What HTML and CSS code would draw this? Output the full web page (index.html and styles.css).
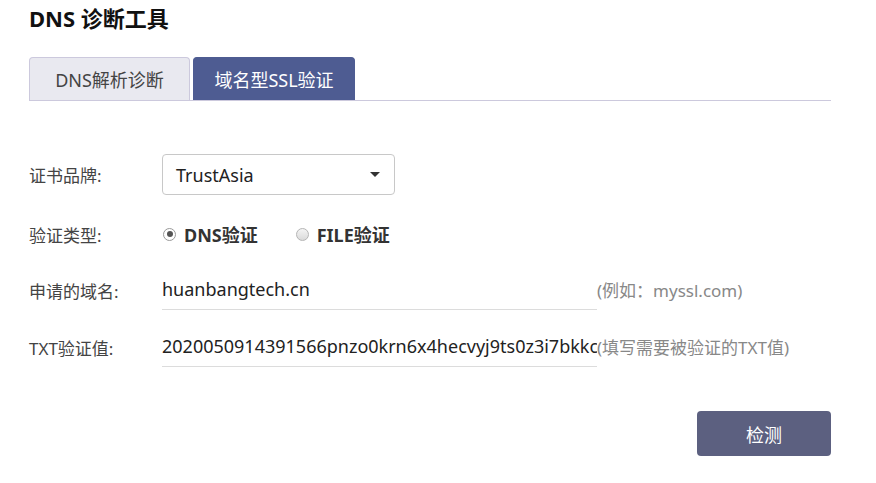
FILE: index.html
```html
<!DOCTYPE html>
<html lang="zh-CN">
<head>
    <meta charset="UTF-8">
    <title>DNS 诊断工具</title>
    <link rel="stylesheet" href="styles.css">
</head>
<body>
<div class="page">
    <div class="title">DNS 诊断工具</div>

    <div class="tabs">
        <div class="tab">DNS解析诊断</div>
        <div class="tab active">域名型SSL验证</div>
    </div>

    <div class="form">
        <div class="row r1">
            <div class="label">证书品牌:</div>
            <div class="select">
                <span>TrustAsia</span>
                <span class="caret"></span>
            </div>
        </div>

        <div class="row r2">
            <div class="label">验证类型:</div>
            <label class="radio checked"><span class="dot"></span>DNS验证</label>
            <label class="radio"><span class="dot"></span>FILE验证</label>
        </div>

        <div class="row r3">
            <div class="label">申请的域名:</div>
            <div class="input">huanbangtech.cn</div>
            <div class="hint">(例如：myssl.com)</div>
        </div>

        <div class="row r4">
            <div class="label">TXT验证值:</div>
            <div class="input">2020050914391566pnzo0krn6x4hecvyj9ts0z3i7bkkc</div>
            <div class="hint">(填写需要被验证的TXT值)</div>
        </div>

        <div class="actions">
            <button class="submit" type="button">检测</button>
        </div>
    </div>
</div>
</body>
</html>
```

FILE: styles.css
```css
body {
    margin: 0;
    background: #fff;
    font-family: "Noto Sans", "Noto Sans CJK SC", sans-serif;
    color: #333;
}

.page {
    width: 802px;
    padding-left: 29px;
}

.title {
    font-size: 22px;
    font-weight: 700;
    line-height: 36px;
    color: #111;
}

.tabs {
    display: flex;
    gap: 3px;
    margin-top: 21px;
    border-bottom: 1px solid #ccc9dd;
}

.tab {
    width: 161px;
    height: 43px;
    box-sizing: border-box;
    display: flex;
    align-items: center;
    justify-content: center;
    font-size: 18px;
    color: #444;
    background-color: #e9e9f0;
    border: 1px solid #ccc9dd;
    border-bottom: 0;
    border-radius: 4px 4px 0 0;
}

.tab.active {
    width: 162px;
    color: #fff;
    background-color: #4e5c92;
    border-color: #4e5c92;
}

.form {
    margin-top: 53px;
}

.row {
    display: flex;
    align-items: center;
}

.label {
    width: 133px;
    font-size: 17px;
    color: #444;
}

.r1 { height: 41px; }
.r2 { height: 30px; margin-top: 24px; }
.r3 { margin-top: 22px; }
.r4 { margin-top: 18px; }

.select {
    width: 233px;
    height: 41px;
    box-sizing: border-box;
    border: 1px solid #c8c8c8;
    border-radius: 4px;
    display: flex;
    align-items: center;
    justify-content: space-between;
    padding: 0 14px 0 13px;
    font-size: 18px;
    color: #222;
}

.caret {
    width: 0;
    height: 0;
    border-left: 5px solid transparent;
    border-right: 5px solid transparent;
    border-top: 5px solid #333;
}

.radio {
    display: flex;
    align-items: center;
    font-size: 18px;
    font-weight: 700;
    color: #333;
    margin-right: 37px;
}

.radio .dot {
    width: 13px;
    height: 13px;
    box-sizing: border-box;
    border-radius: 50%;
    border: 1px solid #b5b5b5;
    background: linear-gradient(#f4f4f4, #dadada);
    margin: 0 8px 0 1px;
    position: relative;
}

.radio.checked .dot {
    background: #fff;
    border-color: #999;
}

.radio.checked .dot::after {
    content: "";
    position: absolute;
    left: 2.5px;
    top: 2.5px;
    width: 6px;
    height: 6px;
    border-radius: 50%;
    background: #555;
}

.input {
    width: 435px;
    height: 39px;
    box-sizing: border-box;
    border-bottom: 1px solid #dcdcdc;
    display: flex;
    align-items: center;
    padding-bottom: 2px;
    font-size: 18px;
    color: #222;
    white-space: nowrap;
    overflow: hidden;
}

.hint {
    font-size: 17px;
    color: #888;
    padding-bottom: 2px;
}

.actions {
    display: flex;
    justify-content: flex-end;
    margin-top: 44px;
}

.submit {
    width: 134px;
    height: 45px;
    border: 0;
    border-radius: 4px;
    background-color: #5c6080;
    color: #fff;
    font-family: inherit;
    font-size: 18px;
    cursor: pointer;
}
```
